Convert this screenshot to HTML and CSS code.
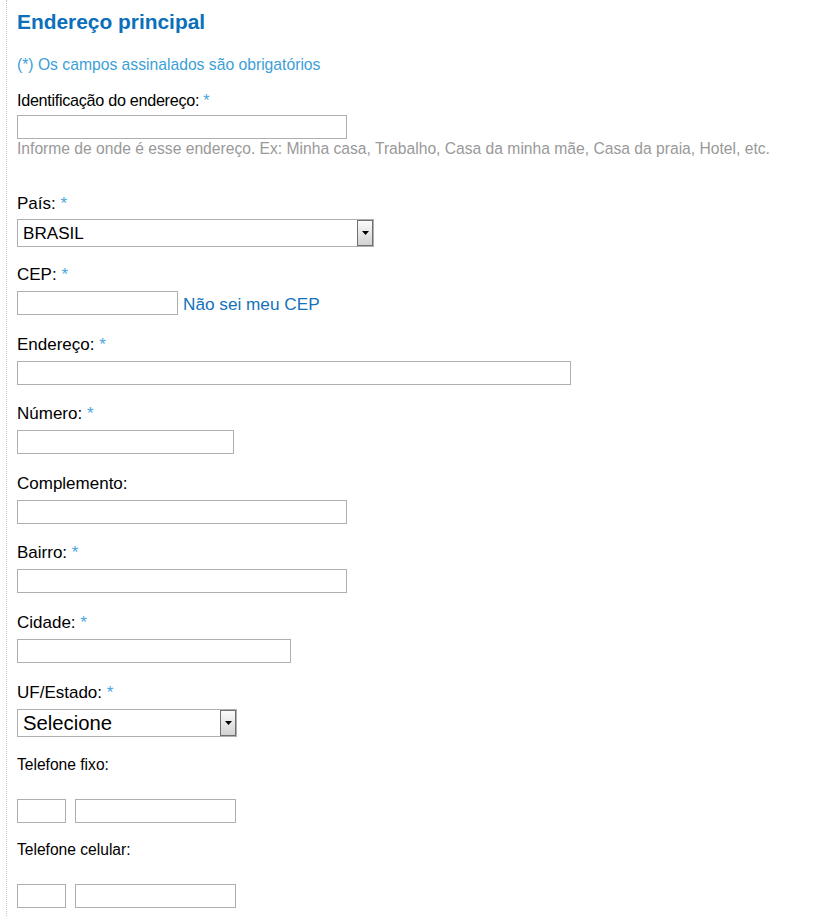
FILE: index.html
```html
<!DOCTYPE html>
<html lang="pt-BR">
<head>
<meta charset="utf-8">
<title>Endereço principal</title>
<link rel="stylesheet" href="styles.css">
</head>
<body>
<div class="page">
  <h1 class="title">Endereço principal</h1>
  <p class="note">(*) Os campos assinalados são obrigatórios</p>

  <div class="field field-id">
    <label class="lbl lbl-id">Identificação do endereço: <span class="req">*</span></label>
    <input class="in w-330" type="text">
    <p class="help">Informe de onde é esse endereço. Ex: Minha casa, Trabalho, Casa da minha mãe, Casa da praia, Hotel, etc.</p>
  </div>

  <div class="field field-pais">
    <label class="lbl lbl-pais">País: <span class="req">*</span></label>
    <div class="sel w-357">
      <select class="sel-box sel-pais"><option>BRASIL</option></select>
      <span class="sel-btn"><svg width="7" height="4" viewBox="0 0 7 4"><path d="M0 0H7L3.5 4Z" fill="#000"/></svg></span>
    </div>
  </div>

  <div class="field">
    <label class="lbl">CEP: <span class="req">*</span></label>
    <div class="row">
      <input class="in w-161" type="text">
      <a class="link" href="#">Não sei meu CEP</a>
    </div>
  </div>

  <div class="field">
    <label class="lbl">Endereço: <span class="req">*</span></label>
    <input class="in w-554" type="text">
  </div>

  <div class="field">
    <label class="lbl">Número: <span class="req">*</span></label>
    <input class="in w-217" type="text">
  </div>

  <div class="field">
    <label class="lbl">Complemento:</label>
    <input class="in w-330" type="text">
  </div>

  <div class="field">
    <label class="lbl">Bairro: <span class="req">*</span></label>
    <input class="in w-330" type="text">
  </div>

  <div class="field">
    <label class="lbl">Cidade: <span class="req">*</span></label>
    <input class="in w-274" type="text">
  </div>

  <div class="field field-uf">
    <label class="lbl">UF/Estado: <span class="req">*</span></label>
    <div class="sel w-220">
      <select class="sel-box sel-uf"><option>Selecione</option></select>
      <span class="sel-btn"><svg width="7" height="4" viewBox="0 0 7 4"><path d="M0 0H7L3.5 4Z" fill="#000"/></svg></span>
    </div>
  </div>

  <div class="field field-tel">
    <label class="lbl lbl-tel">Telefone fixo:</label>
    <div class="row tel-row">
      <input class="in w-49" type="text">
      <input class="in w-161" type="text">
    </div>
  </div>

  <div class="field field-tel">
    <label class="lbl lbl-tel">Telefone celular:</label>
    <div class="row tel-row">
      <input class="in w-49" type="text">
      <input class="in w-161" type="text">
    </div>
  </div>
</div>
</body>
</html>
```

FILE: styles.css
```css
html, body {
  margin: 0;
  padding: 0;
  background: #fff;
}

body {
  font-family: "Liberation Sans", Arial, sans-serif;
  color: #000;
}

.page {
  margin-left: 6px;
  border-left: 1px dotted #c4c4c4;
  padding: 10px 0 0 10px;
  min-height: 906px;
}

.title {
  margin: 0;
  font-size: 20.9px;
  line-height: 24px;
  font-weight: bold;
  color: #0b6fba;
}

.note {
  margin: 22px 0 0;
  font-size: 15.7px;
  line-height: 18px;
  color: #3c9fd7;
}

.field {
  margin-bottom: 20.5px;
}

.field-id {
  margin-top: 17px;
  margin-bottom: 37px;
}

.field-pais {
  margin-bottom: 19px;
}

.field-uf {
  padding-top: 1px;
  margin-bottom: 19px;
}

.field-tel {
  margin-bottom: 18px;
}

.lbl {
  display: block;
  font-size: 17px;
  line-height: 18px;
  margin-bottom: 7px;
  color: #000;
}

.lbl-id {
  font-size: 16.2px;
  letter-spacing: -0.3px;
  margin-bottom: 6px;
}

.lbl-pais {
  margin-bottom: 6px;
}

.lbl-tel {
  font-size: 15.6px;
  margin-bottom: 25px;
}

.req {
  color: #4aa6dd;
}

.in {
  display: block;
  box-sizing: border-box;
  height: 24px;
  margin: 0;
  padding: 2px 4px;
  border: 1px solid #afafaf;
  background: #fff;
  font-family: "Liberation Sans", Arial, sans-serif;
  font-size: 14px;
  outline: none;
}

.w-49 { width: 49px; }
.w-161 { width: 161px; }
.w-217 { width: 217px; }
.w-274 { width: 274px; }
.w-330 { width: 330px; }
.w-554 { width: 554px; }
.w-357 { width: 357px; }
.w-220 { width: 220px; }

.help {
  margin: 1px 0 0;
  font-size: 15.65px;
  line-height: 18px;
  color: #999;
  white-space: nowrap;
}

.row {
  display: flex;
  align-items: center;
}

.tel-row {
  gap: 9px;
}

.link {
  margin-left: 5px;
  padding-top: 1px;
  font-size: 17.2px;
  line-height: 20px;
  color: #1571ba;
  text-decoration: none;
}

.sel {
  position: relative;
  height: 28px;
}

.sel-box {
  display: block;
  width: 100%;
  height: 28px;
  box-sizing: border-box;
  margin: 0;
  padding: 0 20px 0 5px;
  border: 1px solid #afafaf;
  border-radius: 0;
  background: #fff;
  color: #000;
  font-family: "Liberation Sans", Arial, sans-serif;
  -webkit-appearance: none;
  appearance: none;
  outline: none;
}

.sel-pais {
  font-size: 17.1px;
}

.sel-uf {
  font-size: 20.3px;
}

.sel-btn {
  position: absolute;
  top: 1px;
  right: 1px;
  bottom: 1px;
  width: 16px;
  box-sizing: border-box;
  border: 1px solid #6f6f6f;
  background: linear-gradient(#fbfbfb, #d2d2d2);
  display: flex;
  align-items: center;
  justify-content: center;
  pointer-events: none;
}
```
